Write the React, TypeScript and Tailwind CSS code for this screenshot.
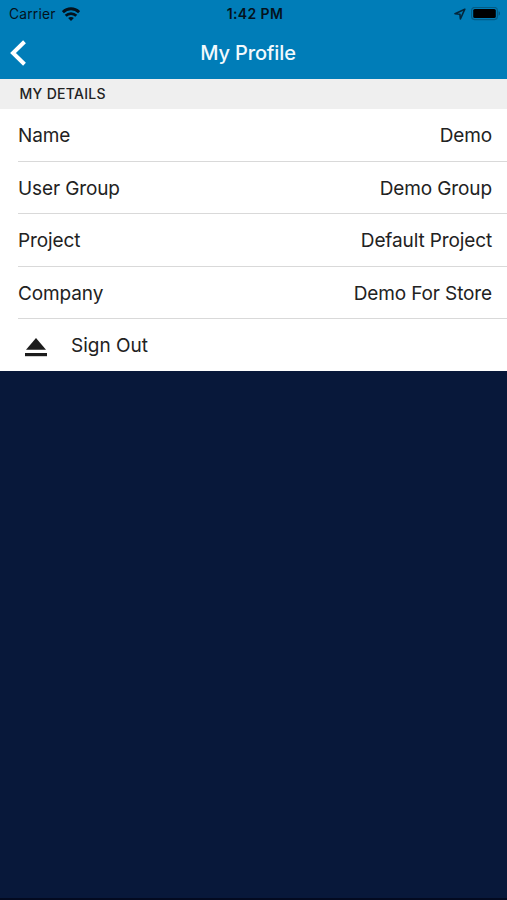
import React from 'react';

const details = [
    { label: 'Name', value: 'Demo' },
    { label: 'User Group', value: 'Demo Group' },
    { label: 'Project', value: 'Default Project' },
    { label: 'Company', value: 'Demo For Store' },
];

const WifiIcon = () => (
    <svg width="18" height="14" viewBox="0 0 18 14" fill="none" stroke="#04121c" strokeWidth="2.8">
        <path d="M0.9 5.2C5.4 0.6 12.6 0.6 17.1 5.2" />
        <path d="M3.7 8.7C6.7 5.8 11.3 5.8 14.3 8.7" />
        <path d="M9 14L6.1 11C7.7 9.6 10.3 9.6 11.9 11Z" fill="#04121c" stroke="none" />
    </svg>
);

const LocationIcon = () => (
    <svg width="12" height="12" viewBox="0 0 12 12" fill="none" stroke="#04263b" strokeWidth="1.6" strokeLinejoin="round">
        <path d="M10.8 1.2L1 5.7L5.9 6.2L6.4 11Z" />
    </svg>
);

const BatteryIcon = () => (
    <svg width="30" height="14" viewBox="0 0 30 14">
        <rect x="0.6" y="0.4" width="25.8" height="12.2" rx="3" fill="none" stroke="#045c84" strokeWidth="1.1" />
        <rect x="2.2" y="2" width="22.6" height="9" rx="1.6" fill="#000" />
        <path d="M27.6 4.3C29.4 4.9 29.4 8.1 27.6 8.7Z" fill="#045478" />
    </svg>
);

const StatusBar = () => (
    <div className="grid h-[27px] grid-cols-[1fr_auto_1fr] items-center pl-[9px] pr-[6px] text-[#04121c]">
        <div className="flex items-center gap-[6px]">
            <span className="pt-px text-[13.8px] tracking-[0.2px]">Carrier</span>
            <WifiIcon />
        </div>
        <span className="text-center text-[14px] font-semibold leading-5 tracking-[0.4px]">1:42 PM</span>
        <div className="flex items-center justify-end gap-[5px]">
            <LocationIcon />
            <BatteryIcon />
        </div>
    </div>
);

const App = () => {
    return (
        <div className="flex h-[900px] w-[507px] flex-col overflow-hidden border-b-2 border-[#030a20] bg-[#08183a] font-['Inter',sans-serif] text-[#222]">
            <header className="h-[78.5px] shrink-0 bg-[#007db8]">
                <StatusBar />
                <div className="grid h-[51px] grid-cols-[1fr_auto_1fr] items-center pl-[10px] pr-[21px]">
                    <button type="button" aria-label="Back" className="w-4">
                        <svg width="17" height="26" viewBox="0 0 17 26" fill="none" stroke="#fff" strokeWidth="4">
                            <path d="M14.5 1.8L3 13L14.5 24.2" />
                        </svg>
                    </button>
                    <h1 className="text-[20px] font-medium leading-none tracking-[-0.15px] text-[#f2f9fd]">My Profile</h1>
                </div>
            </header>

            <main className="shrink-0 bg-white">
                <h2 className="flex h-[30px] items-center bg-[#efefef] pl-[19.5px] text-[14px] font-medium tracking-[0.3px]">
                    MY DETAILS
                </h2>

                <div className="pt-[0.6px]">
                    {details.map(({ label, value }) => (
                        <div key={label} className="ml-[18px] flex h-[52.6px] items-center justify-between border-b border-[#d9d9d9] pr-[15px] pt-[3px] text-[19px] tracking-[-0.12px]">
                            <span>{label}</span>
                            <span>{value}</span>
                        </div>
                    ))}
                </div>

                <button type="button" className="flex h-[51.5px] w-full items-center pl-[25px] pt-[2px] text-[19px]">
                    <svg width="22" height="19" viewBox="0 0 22 19" fill="#1c1c1c" className="mt-[3px]">
                        <path d="M11 0L21 11.8H1Z" />
                        <rect y="15" width="22" height="3.2" />
                    </svg>
                    <span className="ml-6">Sign Out</span>
                </button>
            </main>
        </div>
    );
};

export default App;
